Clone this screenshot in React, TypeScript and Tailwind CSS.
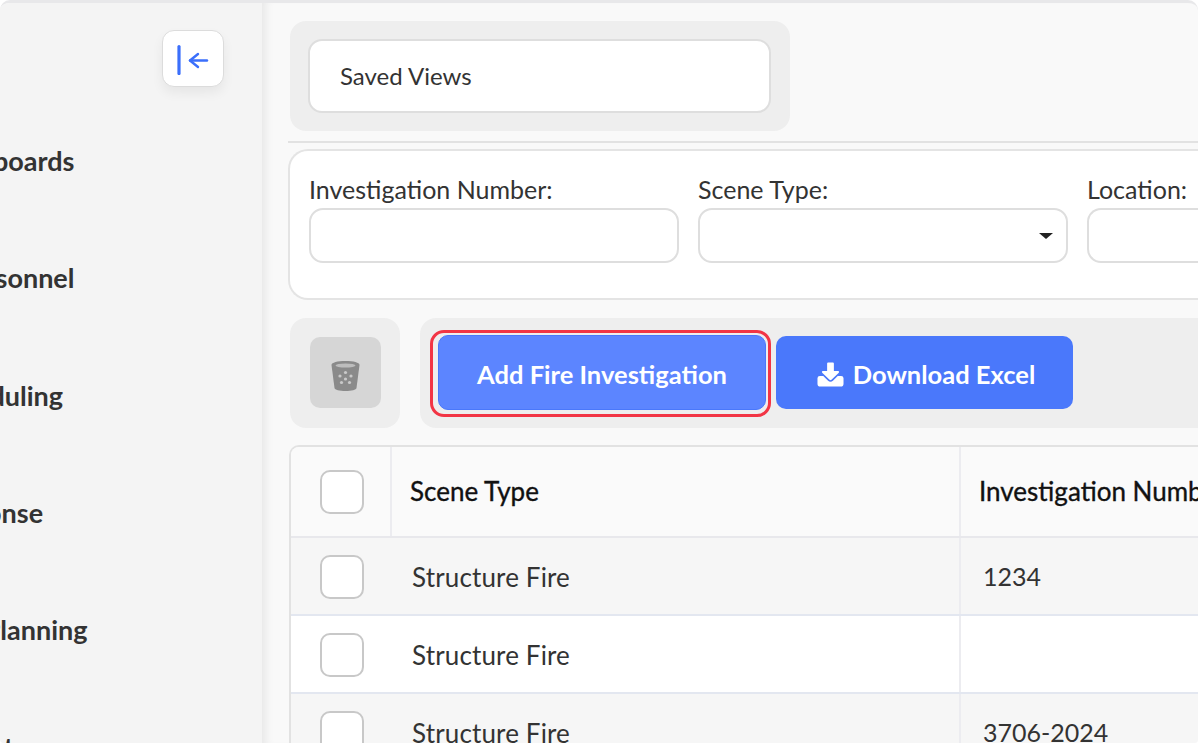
const font = "font-['Lato','Carlito','Open_Sans',sans-serif]";

function NavItem({ text, offset }: { text: string; offset: string }) {
  return (
    <div className={`${offset} flex h-[117.25px] items-center whitespace-nowrap text-[27px] font-bold leading-none text-[#333333]`}>
      {text}
    </div>
  );
}

function Checkbox() {
  return <div className="h-[44px] w-[44px] rounded-[10px] border-2 border-[#c8c8c8] bg-white" />;
}

function Row({ bg, num }: { bg: string; num: string }) {
  return (
    <div className={`${bg} flex h-[78px] shrink-0 border-b-2 border-[#e3e7f0]`}>
      <div className="flex w-[99px] shrink-0 items-center pt-[1px] pl-[29px]">
        <Checkbox />
      </div>
      <div className="flex w-[569px] shrink-0 items-center pt-[2px] pl-[22px] text-[26px] tracking-[0.15px] text-[#333333]">
        Structure Fire
      </div>
      <div className="flex flex-1 items-center border-l-2 border-[#ececf0] pt-[2px] pl-[22px] text-[25px] text-[#333333]">
        {num}
      </div>
    </div>
  );
}

export default function App() {
  return (
    <div className={`${font} h-[746px] w-[1200px] overflow-hidden bg-white pr-[2px] pb-[3px]`}>
      <div className="flex h-full overflow-hidden rounded-t-[10px] rounded-b-[4px] border-t-[3px] border-[#e8e8ea] bg-[#f9f9f9]">
        <aside className="relative flex h-full w-[262px] shrink-0 flex-col overflow-hidden bg-[#f4f4f4]">
          <button className="absolute top-[27px] left-[162px] flex h-[57px] w-[62px] items-center justify-center rounded-[12px] border border-[#dcdcdc] bg-white shadow-[0_6px_12px_rgba(0,0,0,0.06)]">
            <svg width="32" height="32" viewBox="0 0 32 32" fill="none" stroke="#3b6ffb" strokeLinecap="round" strokeLinejoin="round">
              <path d="M2 3.500v27" strokeWidth="3.200" />
              <path d="M13 17.500h17" strokeWidth="2.400" />
              <path d="M21 11l-8 6.500L21 24" strokeWidth="2.400" />
            </svg>
          </button>
          <div className="mt-[99px] flex flex-col">
            <NavItem text="Dashboards" offset="ml-[-68px]" />
            <NavItem text="Personnel" offset="ml-[-45px]" />
            <NavItem text="Scheduling" offset="ml-[-68px]" />
            <NavItem text="Response" offset="ml-[-72px]" />
            <NavItem text="Pre-Planning" offset="ml-[-67px]" />
            <NavItem text="Reports" offset="ml-[-68px]" />
          </div>
        </aside>
        <main className="min-w-0 flex-1 overflow-hidden pt-[18px] pl-[26px] shadow-[inset_10px_0_8px_-6px_rgba(0,0,0,0.07)]">
          <div className="ml-[2px] flex h-[110px] w-[500px] items-center rounded-[16px] bg-[#eeeeee] pl-[18px]">
            <div className="flex h-[74px] w-[463px] items-center rounded-[14px] border-2 border-[#dedede] bg-white pl-[30px] text-[24px] text-[#333333]">
              Saved Views
            </div>
          </div>
          <div className="mt-[10px] h-[2px] bg-[#e2e2e2]" />
          <div className="mt-[6px] flex h-[151px] gap-[19px] overflow-hidden rounded-l-[20px] border-2 border-r-0 border-[#e4e4e4] bg-white pt-[24px] pl-[19px] text-[25px] text-[#333333]">
            <div className="w-[370px] shrink-0">
              <div className="h-[33px] leading-[28px]">Investigation Number:</div>
              <div className="h-[55px] rounded-[14px] border-2 border-[#dedede]" />
            </div>
            <div className="w-[370px] shrink-0">
              <div className="h-[33px] leading-[28px]">Scene Type:</div>
              <div className="flex h-[55px] items-center justify-end rounded-[14px] border-2 border-[#dedede] pr-[13px]">
                <div className="h-0 w-0 border-x-[7px] border-t-[6px] border-x-transparent border-t-[#222222]" />
              </div>
            </div>
            <div className="w-[200px] shrink-0">
              <div className="h-[33px] leading-[28px]">Location:</div>
              <div className="h-[55px] rounded-l-[14px] border-2 border-r-0 border-[#dedede]" />
            </div>
          </div>
          <div className="mt-[18px] flex h-[110px] gap-[20px]">
            <div className="ml-[2px] flex w-[110px] shrink-0 items-center justify-center rounded-[16px] bg-[#eeeeee] pb-[1px]">
              <div className="flex h-[71px] w-[71px] items-center justify-center rounded-[10px] bg-[#d6d6d6] pt-[6px]">
                <svg width="33" height="32" viewBox="0 0 30 32">
                  <path d="M1 5c0-2.500 6-4 14-4s14 1.500 14 4l-3 23c-.3 2-5 3-11 3s-10.700-1-11-3L1 5z" fill="#8a8a8a" />
                  <ellipse cx="15" cy="5.500" rx="10" ry="2" fill="#bdbdbd" />
                  <g fill="#c9c9c9">
                    <circle cx="15" cy="12.500" r="1.600" />
                    <circle cx="9.500" cy="16" r="1.600" /><circle cx="20.500" cy="16" r="1.600" />
                    <circle cx="15" cy="19" r="1.600" />
                    <circle cx="11" cy="22.500" r="1.600" /><circle cx="19" cy="22.500" r="1.600" />
                  </g>
                </svg>
              </div>
            </div>
            <div className="flex min-w-0 flex-1 items-center gap-[10px] rounded-l-[16px] bg-[#eeeeee] pb-[1px] pl-[18px]">
              <div className="relative flex h-[75px] w-[328px] shrink-0 items-center justify-center rounded-[10px] border border-[#4a78fb] bg-[#5c85ff] pt-[4px] text-[25.5px] font-bold text-white">
                Add Fire Investigation
                <div className="absolute -top-[6px] -right-[6px] -bottom-[8px] -left-[9px] rounded-[14px] border-[3.5px] border-[#f23545]" />
              </div>
              <div className="flex h-[73px] w-[297px] shrink-0 items-center justify-center gap-[9px] rounded-[10px] bg-[#4a78fb] pt-[4px] pl-[3px] text-[25.5px] font-bold text-white">
                <svg width="27" height="26" viewBox="0 0 28 26" fill="white" className="-mt-[2px]">
                  <path d="M11.500 1h5a1 1 0 0 1 1 1v8h4.500c.8 0 1.200 1 .6 1.600L15 19a1.400 1.400 0 0 1-2 0l-7.600-7.400C4.800 11 5.200 10 6 10h4.500V2a1 1 0 0 1 1-1z" />
                  <path d="M3 15h3.500l5 5c1.400 1.300 3.600 1.300 5 0l5-5H25a2.500 2.500 0 0 1 2.500 2.500V23a3 3 0 0 1-3 3h-21a3 3 0 0 1-3-3v-5.500A2.500 2.500 0 0 1 3 15z" />
                </svg>
                Download Excel
              </div>
            </div>
          </div>
          <div className="mt-[17px] ml-[1px] flex flex-col overflow-hidden rounded-tl-[10px] border-t-2 border-l-2 border-[#e2e2e2]">
            <div className="flex h-[91px] shrink-0 border-b-2 border-[#e8e8ec] bg-[#fafafa]">
              <div className="flex w-[99px] shrink-0 items-center pl-[29px]"><Checkbox /></div>
              <div className="flex w-[569px] shrink-0 items-center border-l-2 border-[#ececf0] pl-[18px] text-[26px] text-[#111111] [-webkit-text-stroke:0.35px_#111111]">Scene Type</div>
              <div className="flex flex-1 items-center overflow-hidden whitespace-nowrap border-l-2 border-[#ececf0] pl-[18px] text-[26px] text-[#111111] [-webkit-text-stroke:0.35px_#111111]">Investigation Number</div>
            </div>
            <Row bg="bg-[#f6f6f6]" num="1234" />
            <Row bg="bg-white" num="" />
            <Row bg="bg-[#f6f6f6]" num="3706-2024" />
          </div>
        </main>
      </div>
    </div>
  );
}
